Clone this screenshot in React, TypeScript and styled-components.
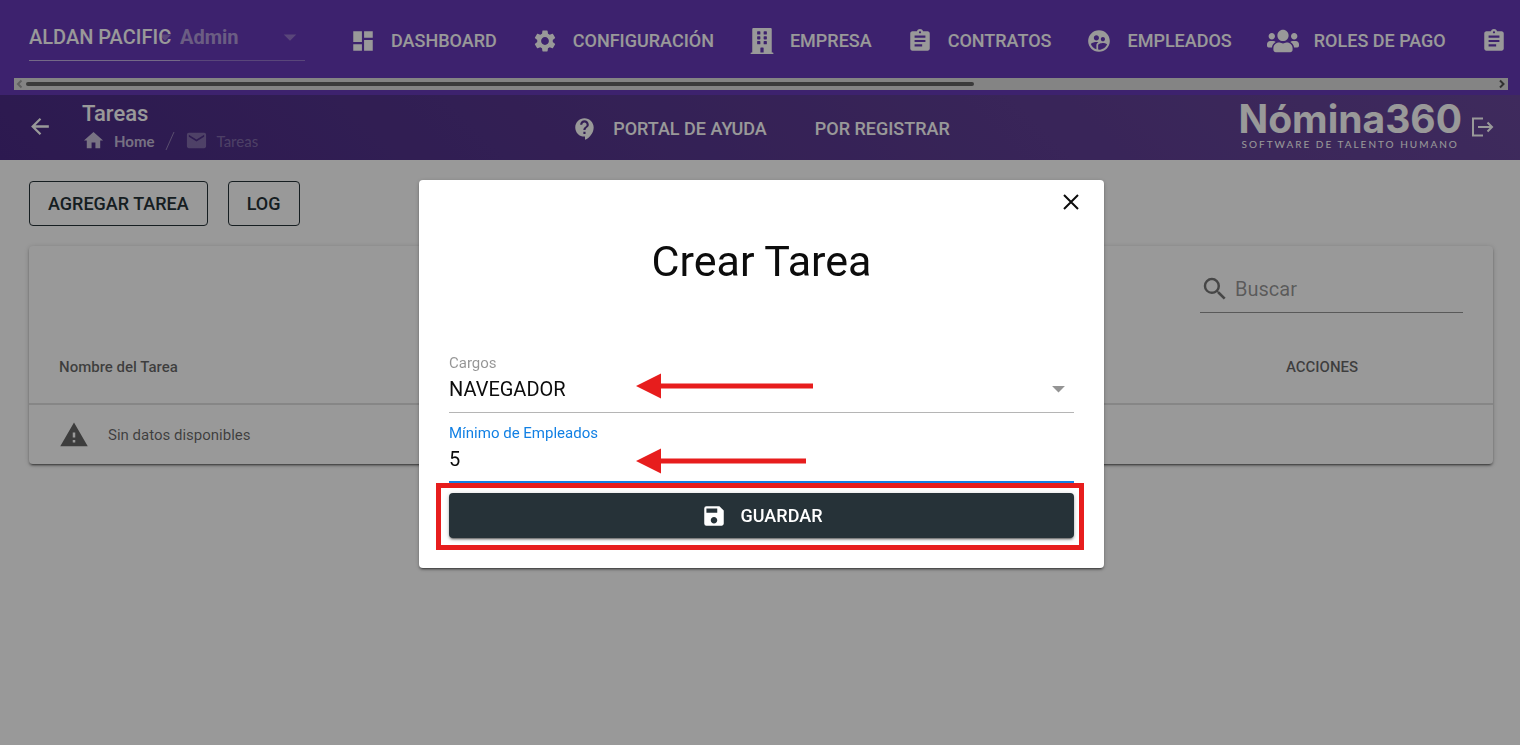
import React from "react";
import styled, { createGlobalStyle, css } from "styled-components";
import { FaBuilding, FaUsers } from "react-icons/fa";
import {
  MdArrowDropDown,
  MdAssignment,
  MdContactSupport,
  MdDashboard,
  MdHome,
  MdMail,
  MdSave,
  MdSearch,
  MdSettings,
  MdSupervisedUserCircle,
  MdWarning,
} from "react-icons/md";

const GlobalStyle = createGlobalStyle`
  *, *::before, *::after { box-sizing: border-box; }
  body {
    margin: 0;
    background: #fff;
    color: rgba(0, 0, 0, 0.87);
    font-family: Roboto, "Liberation Sans", sans-serif;
  }
  button, input, select { font-family: inherit; }
`;

const elevation = css`
  box-shadow: 0 3px 1px -2px rgba(0, 0, 0, 0.3), 0 2px 2px 0 rgba(0, 0, 0, 0.24),
    0 1px 5px 0 rgba(0, 0, 0, 0.2);
`;

const Page = styled.div`
  min-height: 100vh;
  overflow: hidden;
`;

/* ---------- top navigation ---------- */

const TopBar = styled.header`
  height: 95px;
  padding: 0 12px 5px 14px;
  background: #673ab7;
  color: #fff;
`;

const NavRow = styled.nav`
  display: flex;
  align-items: center;
  height: 78px;
  padding-left: 15px;
  overflow: hidden;
`;

const Picker = styled.label<{ $width: number; $muted?: boolean }>`
  position: relative;
  flex: none;
  width: ${(p) => p.$width}px;
  height: 44px;
  padding-top: 4px;
  border-bottom: 1px solid ${(p) => (p.$muted ? "rgba(255,255,255,0.3)" : "rgba(255,255,255,0.6)")};
  svg {
    position: absolute;
    right: 0;
    top: 5px;
    width: 30px;
    height: 30px;
    opacity: 0.3;
  }
`;

const PickerSelect = styled.select<{ $muted?: boolean }>`
  appearance: none;
  width: 100%;
  height: 32px;
  padding: 0;
  border: 0;
  background: transparent;
  font-size: 20px;
  font-weight: ${(p) => (p.$muted ? 700 : 500)};
  color: ${(p) => (p.$muted ? "rgba(255,255,255,0.5)" : "#fff")};
`;

const NavItems = styled.div`
  display: flex;
  align-items: center;
  flex: none;
  gap: 35px;
  margin: 4px 0 0 45px;
`;

const NavLink = styled.a`
  display: inline-flex;
  align-items: center;
  flex: none;
  gap: 15px;
  color: #fff;
  font-size: 18px;
  font-weight: 500;
  line-height: 24px;
  text-decoration: none;
  white-space: nowrap;
`;

const ScrollTrack = styled.div`
  display: flex;
  align-items: center;
  height: 12px;
  background: #dcdcdc;
`;

const ScrollArrow = styled.svg`
  flex: none;
  width: 12px;
  height: 12px;
  fill: none;
  stroke-width: 2;
`;

const ScrollLane = styled.div`
  flex: 1;
`;

const ScrollThumb = styled.div`
  width: 64.5%;
  height: 4px;
  border-radius: 2px;
  background: #636363;
`;

/* ---------- section bar ---------- */

const SectionBar = styled.div`
  display: grid;
  grid-template-columns: 1fr auto 1fr;
  align-items: center;
  height: 65px;
  padding: 0 26px 2px 28px;
  background: linear-gradient(45deg, #4a2b85, #69479b);
  color: #fff;
`;

const SectionLeft = styled.div`
  display: flex;
  align-items: center;
  gap: 29px;
`;

const PlainButton = styled.button`
  display: inline-flex;
  padding: 0;
  border: 0;
  background: transparent;
  color: inherit;
  cursor: pointer;
`;

const Heading = styled.h1`
  margin: 0;
  font-size: 22px;
  font-weight: 500;
  line-height: 28px;
`;

const Crumbs = styled.ol`
  display: flex;
  align-items: center;
  gap: 10px;
  height: 26px;
  margin: 0;
  padding: 0;
  list-style: none;
  font-family: Lato, sans-serif;
  font-size: 15px;
  color: rgba(255, 255, 255, 0.3);
`;

const Crumb = styled.li`
  display: flex;
  align-items: center;
  gap: 9px;
  a {
    display: flex;
    align-items: center;
    gap: 9px;
    color: rgba(255, 255, 255, 0.7);
    font-weight: 700;
    text-decoration: none;
  }
`;

const Slash = styled.svg`
  display: block;
  width: 10px;
  height: 20px;
  stroke: rgba(255, 255, 255, 0.4);
  fill: none;
`;

const SectionLinks = styled.div`
  display: flex;
  gap: 48px;
  padding-top: 4px;
`;

const SectionRight = styled.div`
  display: flex;
  align-items: center;
  justify-content: flex-end;
  gap: 8px;
`;

const Brand = styled.div`
  display: flex;
  flex-direction: column;
  align-items: center;
  padding-bottom: 4px;
  font-family: Inter, sans-serif;
`;

const BrandName = styled.span`
  font-size: 39px;
  font-weight: 700;
  line-height: 38px;
`;

const BrandLine = styled.span`
  font-family: Lato, sans-serif;
  font-size: 10px;
  line-height: 12px;
  letter-spacing: 2px;
`;

/* ---------- content ---------- */

const Content = styled.main`
  padding: 21px 27px 40px 29px;
`;

const Actions = styled.div`
  display: flex;
  gap: 20px;
  margin-bottom: 20px;
`;

const OutlineButton = styled.button`
  height: 45px;
  padding: 0 18px;
  border: 1px solid #263238;
  border-radius: 4px;
  background: transparent;
  color: #263238;
  font-size: 18px;
  font-weight: 500;
  cursor: pointer;
`;

const Card = styled.section`
  border-radius: 4px;
  background: #fff;
  ${elevation}
`;

const SearchRow = styled.div`
  display: flex;
  justify-content: flex-end;
  padding: 20px 30px 17px;
`;

const SearchField = styled.label`
  display: flex;
  align-items: center;
  width: 18%;
  min-width: 263px;
  height: 47px;
  border-bottom: 1px solid rgba(0, 0, 0, 0.42);
  color: rgba(0, 0, 0, 0.54);
`;

const SearchInput = styled.input`
  flex: 1;
  min-width: 0;
  padding: 0 0 0 5px;
  border: 0;
  outline: 0;
  background: transparent;
  font-size: 20px;
  &::placeholder { color: rgba(0, 0, 0, 0.42); opacity: 1; }
`;

const Table = styled.table`
  width: 100%;
  border-collapse: collapse;
  color: rgba(0, 0, 0, 0.6);
  font-size: 15px;
  text-align: left;
`;

const HeadCell = styled.th<{ $actions?: boolean }>`
  height: 74px;
  width: ${(p) => (p.$actions ? "342px" : "auto")};
  padding: 0 30px;
  border-bottom: 2px solid rgba(0, 0, 0, 0.12);
  font-weight: 500;
  text-align: ${(p) => (p.$actions ? "center" : "left")};
`;

const EmptyCell = styled.td`
  height: 60px;
  padding: 0 30px;
`;

const EmptyNote = styled.div`
  display: flex;
  align-items: center;
  gap: 19px;
`;

/* ---------- dialog ---------- */

const Backdrop = styled.div`
  position: fixed;
  inset: 0;
  display: grid;
  place-items: center;
  padding: 3px 0 0 3px;
  background: rgba(0, 0, 0, 0.4);
`;

const Dialog = styled.form`
  width: 685px;
  max-width: 90%;
  padding: 11px 30px 30px;
  border-radius: 4px;
  background: #fff;
  ${elevation}
`;

const CloseRow = styled.div`
  display: flex;
  justify-content: flex-end;
  height: 22px;
  margin-right: -8px;
`;

const Title = styled.h2`
  margin: 20px 0 64px;
  font-size: 43px;
  font-weight: 400;
  line-height: 56px;
  text-align: center;
  color: #0c0c0c;
`;

const Field = styled.div<{ $active?: boolean }>`
  position: relative;
  display: flex;
  flex-direction: column;
  height: 60px;
  margin-bottom: 10px;
  border-bottom: ${(p) => (p.$active ? "2px solid #1280e4" : "1px solid #b5b5b5")};
  label {
    font-size: 15px;
    line-height: 20px;
    color: ${(p) => (p.$active ? "#1280e4" : "rgba(0,0,0,0.42)")};
  }
`;

const control = css`
  appearance: none;
  width: 100%;
  height: 32px;
  padding: 0;
  border: 0;
  outline: 0;
  background: transparent;
  font-size: 20px;
  color: #0c0c0c;
`;

const FieldSelect = styled.select`
  ${control}
`;

const FieldInput = styled.input`
  ${control}
`;

const Caret = styled(MdArrowDropDown)`
  position: absolute;
  right: 0;
  top: 20px;
  width: 31px;
  height: 31px;
  color: #949494;
  pointer-events: none;
`;

const Pointer = styled.svg<{ $top: number }>`
  position: absolute;
  left: 187px;
  top: ${(p) => p.$top}px;
  height: 26px;
  fill: #e71d1d;
`;

const SaveArea = styled.div`
  position: relative;
  &::after {
    content: "";
    position: absolute;
    inset: -10px -10px -12px -13px;
    border: 5px solid #e71d1d;
    pointer-events: none;
  }
`;

const SaveButton = styled.button`
  display: flex;
  align-items: center;
  justify-content: center;
  gap: 14px;
  width: 100%;
  height: 45px;
  border: 0;
  border-radius: 4px;
  background: #263238;
  color: #fff;
  font-size: 18px;
  font-weight: 500;
  ${elevation}
  cursor: pointer;
`;

const navItems = [
  { label: "DASHBOARD", icon: <MdDashboard size={26} /> },
  { label: "CONFIGURACIÓN", icon: <MdSettings size={26} /> },
  { label: "EMPRESA", icon: <FaBuilding size={26} /> },
  { label: "CONTRATOS", icon: <MdAssignment size={26} /> },
  { label: "EMPLEADOS", icon: <MdSupervisedUserCircle size={26} /> },
  { label: "ROLES DE PAGO", icon: <FaUsers size={32} /> },
];

function RedPointer({ length, top }: { length: number; top: number }) {
  return (
    <Pointer $top={top} width={length} viewBox={`0 0 ${length} 26`} aria-hidden="true">
      <path d={`M0 13 L25 0.5 V10.5 H${length} V15.5 H25 V25.5 Z`} />
    </Pointer>
  );
}

export default function App() {
  return (
    <>
      <GlobalStyle />
      <Page>
        <TopBar>
          <NavRow>
            <Picker $width={151}>
              <MdArrowDropDown />
              <PickerSelect aria-label="Empresa">
                <option>ALDAN PACIFIC</option>
              </PickerSelect>
            </Picker>
            <Picker $width={125} $muted>
              <MdArrowDropDown />
              <PickerSelect aria-label="Rol" $muted>
                <option>Admin</option>
              </PickerSelect>
            </Picker>
            <NavItems>
              {navItems.map((item) => (
                <NavLink href="#" key={item.label}>
                  {item.icon}
                  {item.label}
                </NavLink>
              ))}
              <NavLink href="#" aria-label="Reportes">
                <MdAssignment size={26} />
              </NavLink>
            </NavItems>
          </NavRow>
          <ScrollTrack>
            <ScrollArrow viewBox="0 0 12 12" stroke="#a0a0a0">
              <path d="M7.5 2.5 4 6l3.5 3.5" />
            </ScrollArrow>
            <ScrollLane>
              <ScrollThumb />
            </ScrollLane>
            <ScrollArrow viewBox="0 0 12 12" stroke="#505050">
              <path d="M4 2.5 7.5 6 4 9.5" />
            </ScrollArrow>
          </ScrollTrack>
        </TopBar>

        <SectionBar>
          <SectionLeft>
            <PlainButton type="button" aria-label="Volver">
              <svg width="25" height="25" viewBox="0 0 24 24" fill="none" stroke="currentColor" strokeWidth="2.2">
                <path d="M20 12H5M12 4.500 4.500 12l7.500 7.500" />
              </svg>
            </PlainButton>
            <div>
              <Heading>Tareas</Heading>
              <Crumbs>
                <Crumb>
                  <a href="#">
                    <MdHome size={23} />
                    Home
                  </a>
                </Crumb>
                <li>
                  <Slash viewBox="0 0 10 20">
                    <path d="M1 19 9 1" />
                  </Slash>
                </li>
                <Crumb>
                  <MdMail size={23} />
                  Tareas
                </Crumb>
              </Crumbs>
            </div>
          </SectionLeft>
          <SectionLinks>
            <NavLink href="#">
              <MdContactSupport size={26} />
              PORTAL DE AYUDA
            </NavLink>
            <NavLink href="#">POR REGISTRAR</NavLink>
          </SectionLinks>
          <SectionRight>
            <Brand>
              <BrandName>Nómina360</BrandName>
              <BrandLine>SOFTWARE DE TALENTO HUMANO</BrandLine>
            </Brand>
            <PlainButton type="button" aria-label="Salir">
              <svg width="24" height="24" viewBox="0 0 24 24" fill="none" stroke="currentColor" strokeWidth="2">
                <path d="M13 3.5H3v17h10M8 12h14M17.5 7.5 22 12l-4.5 4.5" />
              </svg>
            </PlainButton>
          </SectionRight>
        </SectionBar>

        <Content>
          <Actions>
            <OutlineButton type="button">AGREGAR TAREA</OutlineButton>
            <OutlineButton type="button">LOG</OutlineButton>
          </Actions>
          <Card>
            <SearchRow>
              <SearchField>
                <MdSearch size={30} />
                <SearchInput placeholder="Buscar" aria-label="Buscar" />
              </SearchField>
            </SearchRow>
            <Table>
              <thead>
                <tr>
                  <HeadCell scope="col">Nombre del Tarea</HeadCell>
                  <HeadCell scope="col" $actions>
                    ACCIONES
                  </HeadCell>
                </tr>
              </thead>
              <tbody>
                <tr>
                  <EmptyCell colSpan={2}>
                    <EmptyNote>
                      <MdWarning size={30} />
                      Sin datos disponibles
                    </EmptyNote>
                  </EmptyCell>
                </tr>
              </tbody>
            </Table>
          </Card>
        </Content>
      </Page>

      <Backdrop>
        <Dialog role="dialog" aria-modal="true" aria-labelledby="dialog-title" onSubmit={(e) => e.preventDefault()}>
          <CloseRow>
            <PlainButton type="button" aria-label="Cerrar">
              <svg width="22" height="22" viewBox="0 0 22 22" fill="none" stroke="#0c0c0c" strokeWidth="2">
                <path d="M4 4l14 14M18 4 4 18" />
              </svg>
            </PlainButton>
          </CloseRow>
          <Title id="dialog-title">Crear Tarea</Title>
          <Field>
            <label htmlFor="cargo">Cargos</label>
            <FieldSelect id="cargo">
              <option>NAVEGADOR</option>
            </FieldSelect>
            <Caret />
            <RedPointer length={177} top={20} />
          </Field>
          <Field $active>
            <label htmlFor="minimo">Mínimo de Empleados</label>
            <FieldInput id="minimo" defaultValue="5" inputMode="numeric" />
            <RedPointer length={170} top={25} />
          </Field>
          <SaveArea>
            <SaveButton type="submit">
              <MdSave size={26} />
              GUARDAR
            </SaveButton>
          </SaveArea>
        </Dialog>
      </Backdrop>
    </>
  );
}
